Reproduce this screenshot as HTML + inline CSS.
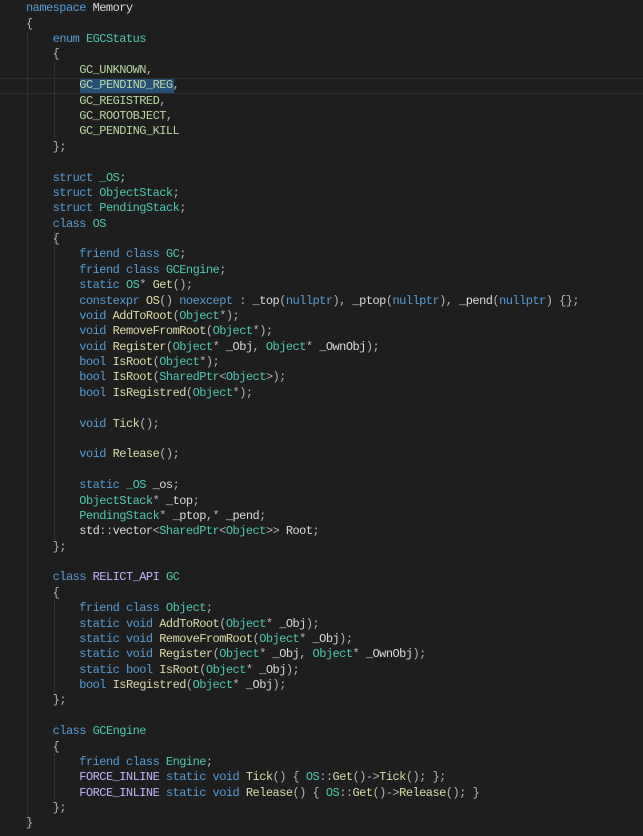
<!DOCTYPE html>
<html><head><meta charset="utf-8"><style>
html,body{margin:0;padding:0;background:#1e1e1e;width:643px;height:836px;overflow:hidden}
#c{position:relative;width:643px;height:836px;font-family:"Liberation Mono",monospace;font-size:12px;letter-spacing:-0.54px;color:#dadada}
.l{position:absolute;left:26px;height:15.4px;line-height:15.4px;white-space:pre}
.k{color:#569cd6}.t{color:#4ec9b0}.f{color:#dcdcaa}.p{color:#b4b4b4}.e{color:#b8d7a3}.m{color:#beb7ff}
.g{position:absolute;width:0;border-left:1px dotted #404040}
.hl{position:absolute;left:0;width:643px;top:78px;height:14px;border-top:1px solid #2c2c2c;border-bottom:1px solid #2c2c2c}
.sel{position:absolute;background:#264f78;left:80px;top:79px;width:94px;height:14px}
</style></head><body><div id="c">
<div class="hl"></div><div class="sel"></div>
<div class="g" style="left:27px;top:32px;height:796px"></div>
<div class="g" style="left:54px;top:63px;height:78px"></div>
<div class="g" style="left:54px;top:232px;height:308px"></div>
<div class="g" style="left:54px;top:600px;height:94px"></div>
<div class="g" style="left:54px;top:754px;height:48px"></div>
<div class="l" style="top:1.3px"><span class="k">namespace</span> Memory</div>
<div class="l" style="top:16.7px"><span class="p">{</span></div>
<div class="l" style="top:32.1px">    <span class="k">enum</span> <span class="t">EGCStatus</span></div>
<div class="l" style="top:47.4px">    <span class="p">{</span></div>
<div class="l" style="top:62.8px">        <span class="e">GC_UNKNOWN</span><span class="p">,</span></div>
<div class="l" style="top:78.2px">        <span class="e">GC_PENDIND_REG</span><span class="p">,</span></div>
<div class="l" style="top:93.6px">        <span class="e">GC_REGISTRED</span><span class="p">,</span></div>
<div class="l" style="top:109.0px">        <span class="e">GC_ROOTOBJECT</span><span class="p">,</span></div>
<div class="l" style="top:124.3px">        <span class="e">GC_PENDING_KILL</span></div>
<div class="l" style="top:139.7px">    <span class="p">};</span></div>
<div class="l" style="top:170.5px">    <span class="k">struct</span> <span class="t">_OS</span><span class="p">;</span></div>
<div class="l" style="top:185.9px">    <span class="k">struct</span> <span class="t">ObjectStack</span><span class="p">;</span></div>
<div class="l" style="top:201.2px">    <span class="k">struct</span> <span class="t">PendingStack</span><span class="p">;</span></div>
<div class="l" style="top:216.6px">    <span class="k">class</span> <span class="t">OS</span></div>
<div class="l" style="top:232.0px">    <span class="p">{</span></div>
<div class="l" style="top:247.4px">        <span class="k">friend</span> <span class="k">class</span> <span class="t">GC</span><span class="p">;</span></div>
<div class="l" style="top:262.8px">        <span class="k">friend</span> <span class="k">class</span> <span class="t">GCEngine</span><span class="p">;</span></div>
<div class="l" style="top:278.1px">        <span class="k">static</span> <span class="t">OS</span><span class="p">*</span> <span class="f">Get</span><span class="p">();</span></div>
<div class="l" style="top:293.5px">        <span class="k">constexpr</span> <span class="f">OS</span><span class="p">()</span> <span class="k">noexcept</span> <span class="p">:</span> _top<span class="p">(</span><span class="k">nullptr</span><span class="p">),</span> _ptop<span class="p">(</span><span class="k">nullptr</span><span class="p">),</span> _pend<span class="p">(</span><span class="k">nullptr</span><span class="p">)</span> <span class="p">{};</span></div>
<div class="l" style="top:308.9px">        <span class="k">void</span> <span class="f">AddToRoot</span><span class="p">(</span><span class="t">Object</span><span class="p">*);</span></div>
<div class="l" style="top:324.3px">        <span class="k">void</span> <span class="f">RemoveFromRoot</span><span class="p">(</span><span class="t">Object</span><span class="p">*);</span></div>
<div class="l" style="top:339.7px">        <span class="k">void</span> <span class="f">Register</span><span class="p">(</span><span class="t">Object</span><span class="p">*</span> _Obj<span class="p">,</span> <span class="t">Object</span><span class="p">*</span> _OwnObj<span class="p">);</span></div>
<div class="l" style="top:355.0px">        <span class="k">bool</span> <span class="f">IsRoot</span><span class="p">(</span><span class="t">Object</span><span class="p">*);</span></div>
<div class="l" style="top:370.4px">        <span class="k">bool</span> <span class="f">IsRoot</span><span class="p">(</span><span class="t">SharedPtr</span><span class="p">&lt;</span><span class="t">Object</span><span class="p">&gt;);</span></div>
<div class="l" style="top:385.8px">        <span class="k">bool</span> <span class="f">IsRegistred</span><span class="p">(</span><span class="t">Object</span><span class="p">*);</span></div>
<div class="l" style="top:416.6px">        <span class="k">void</span> <span class="f">Tick</span><span class="p">();</span></div>
<div class="l" style="top:447.3px">        <span class="k">void</span> <span class="f">Release</span><span class="p">();</span></div>
<div class="l" style="top:478.1px">        <span class="k">static</span> <span class="t">_OS</span> _os<span class="p">;</span></div>
<div class="l" style="top:493.5px">        <span class="t">ObjectStack</span><span class="p">*</span> _top<span class="p">;</span></div>
<div class="l" style="top:508.8px">        <span class="t">PendingStack</span><span class="p">*</span> _ptop<span class="p">,*</span> _pend<span class="p">;</span></div>
<div class="l" style="top:524.2px">        std<span class="p">::</span>vector<span class="p">&lt;</span><span class="t">SharedPtr</span><span class="p">&lt;</span><span class="t">Object</span><span class="p">&gt;&gt;</span> Root<span class="p">;</span></div>
<div class="l" style="top:539.6px">    <span class="p">};</span></div>
<div class="l" style="top:570.4px">    <span class="k">class</span> <span class="m">RELICT_API</span> <span class="t">GC</span></div>
<div class="l" style="top:585.7px">    <span class="p">{</span></div>
<div class="l" style="top:601.1px">        <span class="k">friend</span> <span class="k">class</span> <span class="t">Object</span><span class="p">;</span></div>
<div class="l" style="top:616.5px">        <span class="k">static</span> <span class="k">void</span> <span class="f">AddToRoot</span><span class="p">(</span><span class="t">Object</span><span class="p">*</span> _Obj<span class="p">);</span></div>
<div class="l" style="top:631.9px">        <span class="k">static</span> <span class="k">void</span> <span class="f">RemoveFromRoot</span><span class="p">(</span><span class="t">Object</span><span class="p">*</span> _Obj<span class="p">);</span></div>
<div class="l" style="top:647.3px">        <span class="k">static</span> <span class="k">void</span> <span class="f">Register</span><span class="p">(</span><span class="t">Object</span><span class="p">*</span> _Obj<span class="p">,</span> <span class="t">Object</span><span class="p">*</span> _OwnObj<span class="p">);</span></div>
<div class="l" style="top:662.6px">        <span class="k">static</span> <span class="k">bool</span> <span class="f">IsRoot</span><span class="p">(</span><span class="t">Object</span><span class="p">*</span> _Obj<span class="p">);</span></div>
<div class="l" style="top:678.0px">        <span class="k">bool</span> <span class="f">IsRegistred</span><span class="p">(</span><span class="t">Object</span><span class="p">*</span> _Obj<span class="p">);</span></div>
<div class="l" style="top:693.4px">    <span class="p">};</span></div>
<div class="l" style="top:724.2px">    <span class="k">class</span> <span class="t">GCEngine</span></div>
<div class="l" style="top:739.5px">    <span class="p">{</span></div>
<div class="l" style="top:754.9px">        <span class="k">friend</span> <span class="k">class</span> <span class="t">Engine</span><span class="p">;</span></div>
<div class="l" style="top:770.3px">        <span class="m">FORCE_INLINE</span> <span class="k">static</span> <span class="k">void</span> <span class="f">Tick</span><span class="p">()</span> <span class="p">{</span> <span class="t">OS</span><span class="p">::</span><span class="f">Get</span><span class="p">()-&gt;</span><span class="f">Tick</span><span class="p">();</span> <span class="p">};</span></div>
<div class="l" style="top:785.7px">        <span class="m">FORCE_INLINE</span> <span class="k">static</span> <span class="k">void</span> <span class="f">Release</span><span class="p">()</span> <span class="p">{</span> <span class="t">OS</span><span class="p">::</span><span class="f">Get</span><span class="p">()-&gt;</span><span class="f">Release</span><span class="p">();</span> <span class="p">}</span></div>
<div class="l" style="top:801.1px">    <span class="p">};</span></div>
<div class="l" style="top:816.4px"><span class="p">}</span></div>
</div></body></html>
